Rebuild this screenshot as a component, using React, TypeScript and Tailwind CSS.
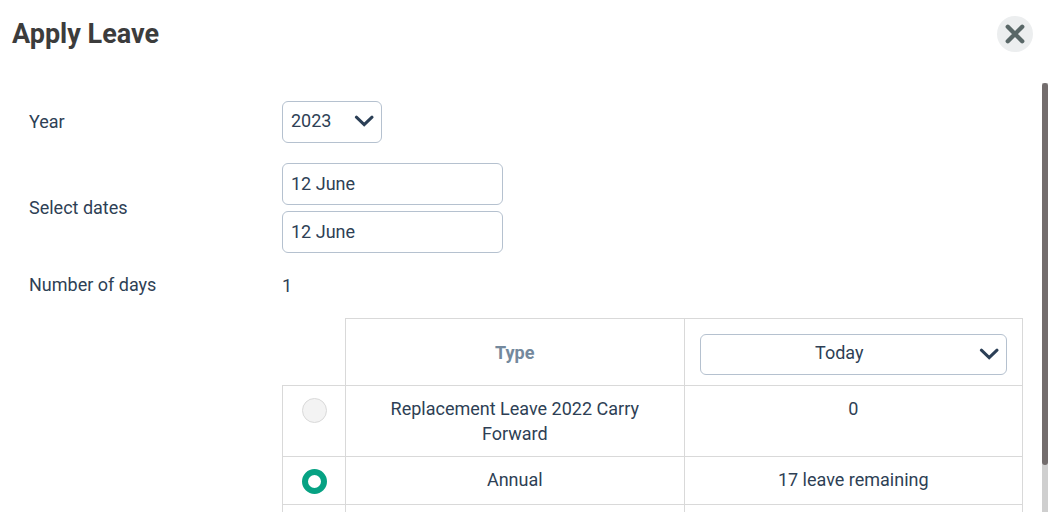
import type { ReactNode } from 'react'

const leaveTypes = [
  { id: 'replacement', name: 'Replacement Leave 2022 Carry Forward', balance: '0', available: false },
  { id: 'annual', name: 'Annual', balance: '17 leave remaining', available: true },
]

const inputStyles =
  'block rounded-md border border-[#b5c1cf] bg-white text-[#2e3f55] focus:outline-none'

function ChevronIcon({ className = '' }: { className?: string }) {
  return (
    <svg
      viewBox="0 0 20 12"
      fill="none"
      stroke="#2b3f56"
      strokeWidth="3"
      strokeLinecap="round"
      className={['pointer-events-none absolute h-3 w-5', className].join(' ')}
      aria-hidden="true"
    >
      <path d="M2.4 2.2 10.2 9.6l7.8-7.4" />
    </svg>
  )
}

function FormRow({ label, htmlFor, children }: { label: string; htmlFor: string; children: ReactNode }) {
  return (
    <div className="flex items-center">
      <label htmlFor={htmlFor} className="w-[253px] shrink-0 pb-px leading-6">
        {label}
      </label>
      {children}
    </div>
  )
}

function LeaveTable() {
  return (
    <table className="w-full table-fixed border-collapse text-center">
      <colgroup>
        <col className="w-[63px]" />
        <col />
        <col />
      </colgroup>
      <thead>
        <tr>
          <td />
          <th className="border border-[#d9d9d9] font-bold text-[#74899d]">Type</th>
          <th className="border border-[#d9d9d9] px-[15px] pt-[15px] pb-[10px] font-normal">
            <div className="relative">
              <select
                aria-label="Balance as of"
                className={[inputStyles, 'h-[41px] w-full appearance-none pr-9 pb-1 pl-2 text-center'].join(' ')}
              >
                <option>Today</option>
              </select>
              <ChevronIcon className="top-[14px] right-2" />
            </div>
          </th>
        </tr>
      </thead>
      <tbody className="align-top">
        {leaveTypes.map((type) => (
          <tr key={type.id}>
            <td className="border border-[#d9d9d9] pt-3 pb-[10px]">
              <input
                type="radio"
                id={type.id}
                name="leave-type"
                disabled={!type.available}
                defaultChecked={type.available}
                className="mx-auto block size-[25px] appearance-none rounded-full border border-[#d9d9d9] bg-white checked:border-[6px] checked:border-[#06a283] disabled:bg-[#f3f3f3]"
              />
            </td>
            <td className="border border-[#d9d9d9] px-6 py-[10px]">
              <label htmlFor={type.id} className="block">
                {type.name}
              </label>
            </td>
            <td className="border border-[#d9d9d9] px-6 py-[10px]">{type.balance}</td>
          </tr>
        ))}
        <tr className="h-12">
          <td className="border border-[#d9d9d9]" />
          <td className="border border-[#d9d9d9]" />
          <td className="border border-[#d9d9d9]" />
        </tr>
      </tbody>
    </table>
  )
}

export default function App() {
  return (
    <div className="flex h-screen flex-col overflow-hidden bg-white font-['Roboto',sans-serif] text-[18px] leading-[25px] text-[#2e3f55]">
      <header className="flex shrink-0 items-center justify-between pt-4 pr-5 pb-[31px] pl-3">
        <h1 className="text-[27px] leading-9 font-bold text-[#3c3c3c]">Apply Leave</h1>
        <button
          type="button"
          aria-label="Close"
          className="flex size-9 items-center justify-center rounded-full bg-[#eceeef]"
        >
          <svg viewBox="0 0 20 20" className="size-5" stroke="#596767" strokeWidth="4.4" strokeLinecap="round" aria-hidden="true">
            <path d="M2.8 2.8 17.2 17.2M17.2 2.8 2.8 17.2" />
          </svg>
        </button>
      </header>

      <div className="flex min-h-0 flex-1 pr-[5px]">
        <form className="flex min-w-0 flex-1 flex-col gap-5 overflow-hidden pt-[18px] pr-[19px] pl-[29px]">
          <FormRow label="Year" htmlFor="year">
            <div className="relative w-[100px]">
              <select id="year" className={[inputStyles, 'h-[42px] w-full appearance-none pr-8 pb-1 pl-2'].join(' ')}>
                <option>2023</option>
              </select>
              <ChevronIcon className="top-[14px] right-2" />
            </div>
          </FormRow>

          <FormRow label="Select dates" htmlFor="start-date">
            <div className="flex w-[221px] flex-col gap-[6px]">
              <input id="start-date" type="text" defaultValue="12 June" className={[inputStyles, 'h-[42px] w-full px-2 pb-[2px]'].join(' ')} />
              <input aria-label="End date" type="text" defaultValue="12 June" className={[inputStyles, 'h-[42px] w-full px-2 pb-[2px]'].join(' ')} />
            </div>
          </FormRow>

          <FormRow label="Number of days" htmlFor="days">
            <output id="days">1</output>
          </FormRow>

          <div className="pl-[253px]">
            <LeaveTable />
          </div>
        </form>

        {/* scroll track */}
        <div className="w-[6px] shrink-0 bg-[#cfcfcf]">
          <div className="h-[89%] rounded-full bg-[#736d6d]" />
        </div>
      </div>
    </div>
  )
}
